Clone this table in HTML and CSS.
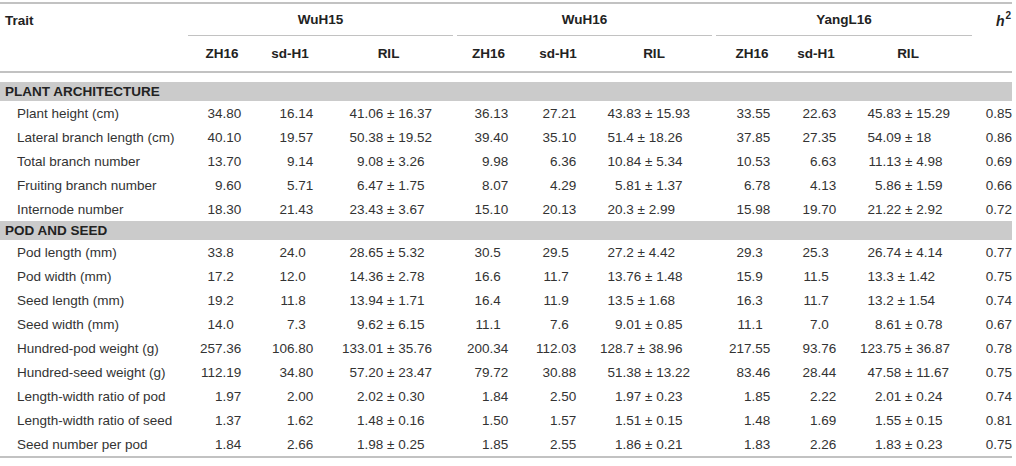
FILE: index.html
```html
<!DOCTYPE html>
<html>
<head>
<meta charset="utf-8">
<link rel="stylesheet" href="styles.css">
</head>
<body>
<div class="tbl">
  <div class="head">
    <div class="h-trait">Trait</div>
    <div class="grp g1"><span>WuH15</span></div>
    <div class="grp g2"><span>WuH16</span></div>
    <div class="grp g3"><span>YangL16</span></div>
    <div class="h-h2"><i>h</i><sup>2</sup></div>
    <div class="sub s1">ZH16</div>
    <div class="sub s2">sd-H1</div>
    <div class="sub s3">RIL</div>
    <div class="sub s4">ZH16</div>
    <div class="sub s5">sd-H1</div>
    <div class="sub s6">RIL</div>
    <div class="sub s7">ZH16</div>
    <div class="sub s8">sd-H1</div>
    <div class="sub s9">RIL</div>
  </div>

  <div class="section first">PLANT ARCHITECTURE</div>
  <div class="row"><div>Plant height (cm)</div><div><span class="i">34</span>.80</div><div><span class="i">16</span>.14</div><div><span class="i">41</span>.06 ± 16.37</div><div><span class="i">36</span>.13</div><div><span class="i">27</span>.21</div><div><span class="i">43</span>.83 ± 15.93</div><div><span class="i">33</span>.55</div><div><span class="i">22</span>.63</div><div><span class="i">45</span>.83 ± 15.29</div><div>0.85</div></div>
  <div class="row"><div>Lateral branch length (cm)</div><div><span class="i">40</span>.10</div><div><span class="i">19</span>.57</div><div><span class="i">50</span>.38 ± 19.52</div><div><span class="i">39</span>.40</div><div><span class="i">35</span>.10</div><div><span class="i">51</span>.4 ± 18.26</div><div><span class="i">37</span>.85</div><div><span class="i">27</span>.35</div><div><span class="i">54</span>.09 ± 18</div><div>0.86</div></div>
  <div class="row"><div>Total branch number</div><div><span class="i">13</span>.70</div><div><span class="i">9</span>.14</div><div><span class="i">9</span>.08 ± 3.26</div><div><span class="i">9</span>.98</div><div><span class="i">6</span>.36</div><div><span class="i">10</span>.84 ± 5.34</div><div><span class="i">10</span>.53</div><div><span class="i">6</span>.63</div><div><span class="i">11</span>.13 ± 4.98</div><div>0.69</div></div>
  <div class="row"><div>Fruiting branch number</div><div><span class="i">9</span>.60</div><div><span class="i">5</span>.71</div><div><span class="i">6</span>.47 ± 1.75</div><div><span class="i">8</span>.07</div><div><span class="i">4</span>.29</div><div><span class="i">5</span>.81 ± 1.37</div><div><span class="i">6</span>.78</div><div><span class="i">4</span>.13</div><div><span class="i">5</span>.86 ± 1.59</div><div>0.66</div></div>
  <div class="row"><div>Internode number</div><div><span class="i">18</span>.30</div><div><span class="i">21</span>.43</div><div><span class="i">23</span>.43 ± 3.67</div><div><span class="i">15</span>.10</div><div><span class="i">20</span>.13</div><div><span class="i">20</span>.3 ± 2.99</div><div><span class="i">15</span>.98</div><div><span class="i">19</span>.70</div><div><span class="i">21</span>.22 ± 2.92</div><div>0.72</div></div>

  <div class="section">POD AND SEED</div>
  <div class="row"><div>Pod length (mm)</div><div><span class="i">33</span>.8</div><div><span class="i">24</span>.0</div><div><span class="i">28</span>.65 ± 5.32</div><div><span class="i">30</span>.5</div><div><span class="i">29</span>.5</div><div><span class="i">27</span>.2 ± 4.42</div><div><span class="i">29</span>.3</div><div><span class="i">25</span>.3</div><div><span class="i">26</span>.74 ± 4.14</div><div>0.77</div></div>
  <div class="row"><div>Pod width (mm)</div><div><span class="i">17</span>.2</div><div><span class="i">12</span>.0</div><div><span class="i">14</span>.36 ± 2.78</div><div><span class="i">16</span>.6</div><div><span class="i">11</span>.7</div><div><span class="i">13</span>.76 ± 1.48</div><div><span class="i">15</span>.9</div><div><span class="i">11</span>.5</div><div><span class="i">13</span>.3 ± 1.42</div><div>0.75</div></div>
  <div class="row"><div>Seed length (mm)</div><div><span class="i">19</span>.2</div><div><span class="i">11</span>.8</div><div><span class="i">13</span>.94 ± 1.71</div><div><span class="i">16</span>.4</div><div><span class="i">11</span>.9</div><div><span class="i">13</span>.5 ± 1.68</div><div><span class="i">16</span>.3</div><div><span class="i">11</span>.7</div><div><span class="i">13</span>.2 ± 1.54</div><div>0.74</div></div>
  <div class="row"><div>Seed width (mm)</div><div><span class="i">14</span>.0</div><div><span class="i">7</span>.3</div><div><span class="i">9</span>.62 ± 6.15</div><div><span class="i">11</span>.1</div><div><span class="i">7</span>.6</div><div><span class="i">9</span>.01 ± 0.85</div><div><span class="i">11</span>.1</div><div><span class="i">7</span>.0</div><div><span class="i">8</span>.61 ± 0.78</div><div>0.67</div></div>
  <div class="row"><div>Hundred-pod weight (g)</div><div><span class="i">257</span>.36</div><div><span class="i">106</span>.80</div><div><span class="i">133</span>.01 ± 35.76</div><div><span class="i">200</span>.34</div><div><span class="i">112</span>.03</div><div><span class="i">128</span>.7 ± 38.96</div><div><span class="i">217</span>.55</div><div><span class="i">93</span>.76</div><div><span class="i">123</span>.75 ± 36.87</div><div>0.78</div></div>
  <div class="row"><div>Hundred-seed weight (g)</div><div><span class="i">112</span>.19</div><div><span class="i">34</span>.80</div><div><span class="i">57</span>.20 ± 23.47</div><div><span class="i">79</span>.72</div><div><span class="i">30</span>.88</div><div><span class="i">51</span>.38 ± 13.22</div><div><span class="i">83</span>.46</div><div><span class="i">28</span>.44</div><div><span class="i">47</span>.58 ± 11.67</div><div>0.75</div></div>
  <div class="row"><div>Length-width ratio of pod</div><div><span class="i">1</span>.97</div><div><span class="i">2</span>.00</div><div><span class="i">2</span>.02 ± 0.30</div><div><span class="i">1</span>.84</div><div><span class="i">2</span>.50</div><div><span class="i">1</span>.97 ± 0.23</div><div><span class="i">1</span>.85</div><div><span class="i">2</span>.22</div><div><span class="i">2</span>.01 ± 0.24</div><div>0.74</div></div>
  <div class="row"><div>Length-width ratio of seed</div><div><span class="i">1</span>.37</div><div><span class="i">1</span>.62</div><div><span class="i">1</span>.48 ± 0.16</div><div><span class="i">1</span>.50</div><div><span class="i">1</span>.57</div><div><span class="i">1</span>.51 ± 0.15</div><div><span class="i">1</span>.48</div><div><span class="i">1</span>.69</div><div><span class="i">1</span>.55 ± 0.15</div><div>0.81</div></div>
  <div class="row"><div>Seed number per pod</div><div><span class="i">1</span>.84</div><div><span class="i">2</span>.66</div><div><span class="i">1</span>.98 ± 0.25</div><div><span class="i">1</span>.85</div><div><span class="i">2</span>.55</div><div><span class="i">1</span>.86 ± 0.21</div><div><span class="i">1</span>.83</div><div><span class="i">2</span>.26</div><div><span class="i">1</span>.83 ± 0.23</div><div>0.75</div></div>
</div>
</body>
</html>
```
FILE: styles.css
```css
html, body {
  margin: 0;
  padding: 0;
  background: #fff;
}
body {
  font-family: "Liberation Sans", Arial, sans-serif;
  font-size: 13.5px;
  color: #333;
}
.tbl {
  width: 1012px;
  margin-top: 2px;
  border-top: 2px solid #c2c2c2;
  border-bottom: 2px solid #c2c2c2;
}
.head {
  display: grid;
  grid-template-columns: 186px 72px 64px 133px 67px 72px 120px 76px 52px 132px 38px;
  grid-template-rows: 32px 35px;
  border-bottom: 2px solid #c2c2c2;
  font-weight: bold;
  color: #222;
}
.h-trait {
  grid-column: 1;
  grid-row: 1;
  padding-left: 5px;
  display: flex;
  align-items: center;
}
.grp {
  grid-row: 1;
  margin: 0 2px;
  border-bottom: 1px solid #c2c2c2;
  display: flex;
  align-items: center;
  justify-content: center;
}
.g1 { grid-column: 2 / 5; }
.g2 { grid-column: 5 / 8; }
.g3 { grid-column: 8 / 11; }
.h-h2 {
  grid-column: 11;
  grid-row: 1;
  display: flex;
  align-items: center;
  justify-content: flex-end;
  padding-right: 1px;
  padding-top: 2px;
  font-size: 14px;
}
.h-h2 sup {
  font-size: 10px;
  line-height: 0;
  position: relative;
  top: -5px;
  margin-left: 1px;
}
.sub {
  grid-row: 2;
  display: flex;
  align-items: center;
  justify-content: center;
}
.s1 { grid-column: 2; }
.s2 { grid-column: 3; }
.s3 { grid-column: 4; }
.s4 { grid-column: 5; }
.s5 { grid-column: 6; }
.s6 { grid-column: 7; }
.s7 { grid-column: 8; }
.s8 { grid-column: 9; }
.s9 { grid-column: 10; }

.section {
  height: 19px;
  line-height: 19px;
  background: #cbcbcb;
  font-weight: bold;
  color: #222;
  padding-left: 5px;
}
.section.first {
  margin-top: 9px;
}
.row {
  display: grid;
  grid-template-columns: 186px 72px 64px 133px 67px 72px 120px 76px 52px 132px 38px;
  height: 24px;
  align-items: center;
  white-space: nowrap;
}
.row > div:nth-child(1) { padding-left: 17px; }
.row > div:nth-child(2) { padding-left: 12.5px; }
.row > div:nth-child(3) { padding-left: 12.5px; }
.row > div:nth-child(4) { padding-left: 18.5px; }
.row > div:nth-child(5) { padding-left: 10.5px; }
.row > div:nth-child(6) { padding-left: 11.5px; }
.row > div:nth-child(7) { padding-left: 4.5px; }
.row > div:nth-child(8) { padding-left: 13.5px; }
.row > div:nth-child(9) { padding-left: 3.5px; }
.row > div:nth-child(10) { padding-left: 16.5px; }
.row > div:nth-child(11) { text-align: right; }
.i {
  display: inline-block;
  width: 24px;
  text-align: right;
}
```
